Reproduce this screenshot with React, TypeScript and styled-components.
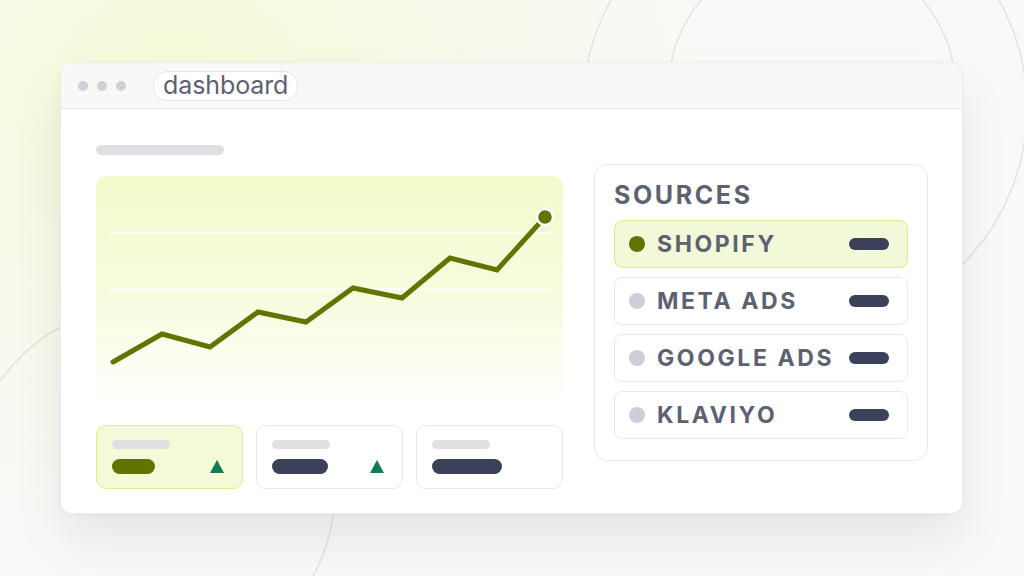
import styled, { createGlobalStyle } from "styled-components";

const GlobalStyle = createGlobalStyle`
  html, body {
    margin: 0;
    padding: 0;
  }
  body {
    font-family: Inter, "Liberation Sans", Arial, sans-serif;
    background: #f9f9f8;
  }
`;

// Colours used across the dashboard
const olive = "#617400";
const navy = "#3b4159";
const muted = "#5d6172";
const placeholder = "#dfe0e4";
const hairline = "#e8e8e6";

const Page = styled.div`
  position: relative;
  width: 1024px;
  height: 576px;
  overflow: hidden;
  box-sizing: border-box;
  padding: 62px 0 0 60px;
  background: radial-gradient(
      ellipse 560px 460px at 180px 90px,
      rgba(243, 250, 212, 0.95) 0%,
      rgba(246, 250, 226, 0.6) 50%,
      rgba(249, 249, 248, 0) 100%
    ),
    #f9f9f8;
`;

// Decorative rings behind the window
const Rings = styled.svg`
  position: absolute;
  inset: 0;
  width: 1024px;
  height: 576px;
  pointer-events: none;
`;

const Window = styled.div`
  position: relative;
  width: 903px;
  height: 452px;
  background: #ffffff;
  border: 1px solid #ecece9;
  border-radius: 12px;
  box-sizing: border-box;
  overflow: hidden;
  display: flex;
  flex-direction: column;
  box-shadow: 0 28px 50px rgba(30, 30, 30, 0.08), 0 2px 6px rgba(0, 0, 0, 0.03);
`;

const TitleBar = styled.div`
  height: 46px;
  flex-shrink: 0;
  display: flex;
  align-items: center;
  gap: 27px;
  padding: 0 0 0 17px;
  background: #f8f8f6;
  border-bottom: 1px solid ${hairline};
  box-sizing: border-box;
`;

const Dots = styled.div`
  display: flex;
  gap: 9px;
`;

const Dot = styled.span`
  width: 10px;
  height: 10px;
  border-radius: 50%;
  background: #cfd0d8;
`;

const AddressPill = styled.div`
  height: 28px;
  padding: 0 9px;
  display: flex;
  align-items: center;
  background: #ffffff;
  border: 1px solid #e6e6e3;
  border-radius: 14px;
  font-size: 25px;
  color: ${muted};
  letter-spacing: -0.1px;
  line-height: 1;
`;

const Body = styled.div`
  flex: 1;
  display: flex;
  gap: 31px;
  padding: 36px 34px 0 35px;
`;

const LeftColumn = styled.div`
  width: 467px;
  display: flex;
  flex-direction: column;
`;

const HeadingBar = styled.div`
  width: 128px;
  height: 10px;
  border-radius: 5px;
  background: ${placeholder};
  margin-bottom: 21px;
`;

const ChartBox = styled.div`
  position: relative;
  height: 229px;
  border-radius: 10px;
  background: linear-gradient(180deg, #f2facb 0%, #f7fcdf 55%, #ffffff 100%);
  margin-bottom: 20px;
`;

const ChartSvg = styled.svg`
  display: block;
  width: 467px;
  height: 229px;
`;

const StatRow = styled.div`
  display: grid;
  grid-template-columns: repeat(3, 147px);
  gap: 13px;
`;

const StatCard = styled.div<{ $active?: boolean }>`
  height: 64px;
  box-sizing: border-box;
  border-radius: 10px;
  padding: 14px 16px 0 15px;
  display: flex;
  flex-direction: column;
  gap: 10px;
  background: ${(p) => (p.$active ? "#f3fad8" : "#ffffff")};
  border: 1.5px solid ${(p) => (p.$active ? "#dcf08c" : hairline)};
`;

const StatLabel = styled.div`
  width: 58px;
  height: 9px;
  border-radius: 5px;
  background: ${placeholder};
`;

const StatValueRow = styled.div`
  display: flex;
  align-items: center;
  justify-content: space-between;
  padding-right: 2px;
`;

const StatValue = styled.div<{ $width: number; $color: string }>`
  width: ${(p) => p.$width}px;
  height: 15px;
  border-radius: 8px;
  background: ${(p) => p.$color};
`;

const UpArrow = styled.div`
  width: 0;
  height: 0;
  border-left: 7px solid transparent;
  border-right: 7px solid transparent;
  border-bottom: 13px solid #137a56;
`;

const SourcesPanel = styled.div`
  margin-top: 19px;
  width: 335px;
  height: 297px;
  box-sizing: border-box;
  border: 1.5px solid ${hairline};
  border-radius: 14px;
  padding: 14px 19px 0 19px;
  display: flex;
  flex-direction: column;
`;

const PanelTitle = styled.div`
  font-size: 25px;
  font-weight: 700;
  letter-spacing: 2.6px;
  color: ${muted};
  line-height: 32px;
  margin-bottom: 9px;
`;

const SourceList = styled.div`
  display: flex;
  flex-direction: column;
  gap: 9px;
`;

const SourceRow = styled.div<{ $active?: boolean }>`
  height: 48px;
  box-sizing: border-box;
  display: flex;
  align-items: center;
  padding: 0 18px 0 14px;
  border-radius: 8px;
  background: ${(p) => (p.$active ? "#f2f9d8" : "#ffffff")};
  border: 1.5px solid ${(p) => (p.$active ? "#d9ef80" : hairline)};
`;

const SourceDot = styled.span<{ $active?: boolean }>`
  width: 16px;
  height: 16px;
  border-radius: 50%;
  flex-shrink: 0;
  background: ${(p) => (p.$active ? olive : "#cdcfd8")};
  margin-right: 12px;
`;

const SourceName = styled.span`
  flex: 1;
  font-size: 23px;
  font-weight: 700;
  letter-spacing: 2.6px;
  color: ${muted};
  white-space: nowrap;
`;

const SourceBar = styled.span`
  width: 40px;
  height: 12px;
  border-radius: 6px;
  background: ${navy};
  flex-shrink: 0;
`;

const chartPoints: [number, number][] = [
  [17, 186],
  [66, 158],
  [114, 171],
  [162, 136],
  [210, 146],
  [257, 112],
  [306, 122],
  [354, 82],
  [401, 94],
  [449, 41],
];

const stats = [
  { active: true, width: 43, color: olive, up: true },
  { active: false, width: 56, color: navy, up: true },
  { active: false, width: 70, color: navy, up: false },
];

const sources = [
  { name: "SHOPIFY", active: true },
  { name: "META ADS", active: false },
  { name: "GOOGLE ADS", active: false },
  { name: "KLAVIYO", active: false },
];

const App = (): JSX.Element => {
  const last = chartPoints[chartPoints.length - 1];
  return (
    <>
      <GlobalStyle />
      <Page>
        <Rings viewBox="0 0 1024 576">
          <circle cx="805" cy="108" r="222" fill="none" stroke="#e3e3e0" strokeWidth="1.5" />
          <circle cx="812" cy="92" r="144" fill="none" stroke="#e3e3e0" strokeWidth="1.5" />
          <circle cx="150" cy="489" r="185" fill="none" stroke="#e3e3e0" strokeWidth="1.5" />
        </Rings>
        <Window>
          <TitleBar>
            <Dots>
              <Dot />
              <Dot />
              <Dot />
            </Dots>
            <AddressPill>dashboard</AddressPill>
          </TitleBar>
          <Body>
            <LeftColumn>
              <HeadingBar />
              <ChartBox>
                <ChartSvg viewBox="0 0 467 229">
                  <line x1="12" y1="57" x2="456" y2="57" stroke="#ffffff" strokeWidth="1.5" opacity="0.9" />
                  <line x1="12" y1="113" x2="456" y2="113" stroke="#ffffff" strokeWidth="1.5" opacity="0.9" />
                  <polyline
                    points={chartPoints.map((p) => p.join(",")).join(" ")}
                    fill="none"
                    stroke={olive}
                    strokeWidth="5"
                    strokeLinejoin="miter"
                    strokeLinecap="round"
                  />
                  <circle cx={last[0]} cy={last[1]} r="8" fill={olive} stroke="#ffffff" strokeWidth="2.5" />
                </ChartSvg>
              </ChartBox>
              <StatRow>
                {stats.map((s, i) => (
                  <StatCard key={i} $active={s.active}>
                    <StatLabel />
                    <StatValueRow>
                      <StatValue $width={s.width} $color={s.color} />
                      {s.up && <UpArrow />}
                    </StatValueRow>
                  </StatCard>
                ))}
              </StatRow>
            </LeftColumn>
            <SourcesPanel>
              <PanelTitle>SOURCES</PanelTitle>
              <SourceList>
                {sources.map((s) => (
                  <SourceRow key={s.name} $active={s.active}>
                    <SourceDot $active={s.active} />
                    <SourceName>{s.name}</SourceName>
                    <SourceBar />
                  </SourceRow>
                ))}
              </SourceList>
            </SourcesPanel>
          </Body>
        </Window>
      </Page>
    </>
  );
};

export default App;
